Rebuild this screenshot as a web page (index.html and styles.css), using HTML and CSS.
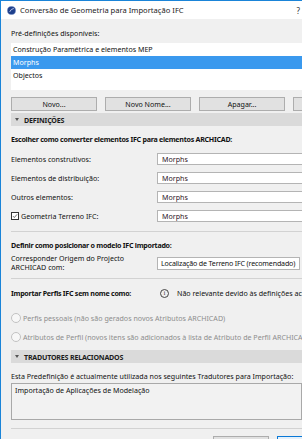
FILE: index.html
```html
<!DOCTYPE html>
<html>
<head>
    <link rel="stylesheet" href="styles.css">
</head>
<body>
    <div class="window">
        <div class="titlebar">
            <svg class="app-icon" viewBox="0 0 10 10">
                <circle cx="5" cy="5" r="4.5" fill="#1d3f8c"/>
                <circle cx="5" cy="5" r="4.5" fill="none" stroke="#6a86c4" stroke-width="0.6"/>
                <path d="M3 6.5 Q4.5 3 7.5 2.8" stroke="#dfe8ff" stroke-width="0.9" fill="none"/>
            </svg>
            <span class="title">Conversão de Geometria para Importação IFC</span>
            <span class="help">?</span>
        </div>

        <div class="content">
            <div class="preset-label">Pré-definições disponíveis:</div>
            <div class="listbox">
                <div class="list-row">Construção Paramétrica e elementos MEP</div>
                <div class="list-row selected">Morphs</div>
                <div class="list-row">Objectos</div>
            </div>

            <div class="button-row">
                <button>Novo...</button>
                <button>Novo Nome...</button>
                <button>Apagar...</button>
                <button></button>
            </div>

            <div class="section-header"><span class="arrow"></span>DEFINIÇÕES</div>

            <div class="bold-line">Escolher como converter elementos IFC para elementos ARCHICAD:</div>

            <div class="field-row first">
                <div class="field-label">Elementos construtivos:</div>
                <div class="field-input">Morphs</div>
            </div>
            <div class="field-row">
                <div class="field-label">Elementos de distribuição:</div>
                <div class="field-input">Morphs</div>
            </div>
            <div class="field-row">
                <div class="field-label">Outros elementos:</div>
                <div class="field-input">Morphs</div>
            </div>
            <div class="field-row">
                <div class="field-label check-label">
                    <span class="checkbox">
                        <svg viewBox="0 0 8 8"><path d="M1.3 4.2 L3.1 6 L6.8 1.8" stroke="#222" stroke-width="0.9" fill="none"/></svg>
                    </span>
                    Geometria Terreno IFC:
                </div>
                <div class="field-input">Morphs</div>
            </div>

            <div class="separator"></div>

            <div class="bold-line">Definir como posicionar o modelo IFC importado:</div>

            <div class="field-row origin-row">
                <div class="field-label two-line">Corresponder Origem do Projecto<br>ARCHICAD com:</div>
                <div class="field-input wide">Localização de Terreno IFC (recomendado)</div>
            </div>

            <div class="separator short-gap"></div>

            <div class="profile-row">
                <div class="bold-line">Importar Perfis IFC sem nome como:</div>
                <div class="info">
                    <span class="info-icon">i</span>
                    <span>Não relevante devido às definições acima</span>
                </div>
            </div>

            <div class="radio-line first-radio"><span class="radio"></span>Perfis pessoais (não são gerados novos Atributos ARCHICAD)</div>
            <div class="radio-line"><span class="radio"></span>Atributos de Perfil (novos itens são adicionados à lista de Atributo de Perfil ARCHICAD)</div>

            <div class="section-header second"><span class="arrow"></span>TRADUTORES RELACIONADOS</div>

            <div class="plain-line">Esta Predefinição é actualmente utilizada nos seguintes Tradutores para Importação:</div>

            <div class="translators">
                <div class="translator">Importação de Aplicações de Modelação</div>
            </div>

            <div class="separator bottom"></div>

            <div class="footer">
                <button class="small"></button>
                <button class="small default"></button>
            </div>
        </div>
    </div>
</body>
</html>
```

FILE: styles.css
```css
:root {
    --window-border: #1a84d8;
    --body-bg: #f0f0f0;
    --header-bg: #dadada;
    --selection: #3a99ee;
    --input-border: #b4b4b4;
    --line: #d2d2d2;
    --disabled: #8d8d8d;
}

body {
    margin: 0;
    width: 302px;
    height: 439px;
    overflow: hidden;
    background: var(--body-bg);
    font-family: "Noto Sans", "Open Sans", sans-serif;
    font-size: 7.1px;
    color: #111;
}

.window {
    height: 100%;
    border-top: 1px solid var(--window-border);
    border-left: 1px solid var(--window-border);
    box-sizing: border-box;
    overflow: hidden;
}

.titlebar {
    height: 18px;
    background: #fff;
    display: flex;
    align-items: center;
    padding-left: 6px;
}

.app-icon {
    width: 9px;
    height: 9px;
    margin-right: 4px;
}

.title {
    font-size: 7.6px;
    color: #222;
}

.help {
    margin-left: auto;
    margin-right: 2px;
    font-size: 8px;
    color: #333;
}

.content {
    padding-left: 10px;
}

.preset-label {
    margin-top: 8px;
    line-height: 12px;
}

.listbox {
    margin-top: 4px;
    height: 47px;
    background: #fff;
}

.list-row {
    height: 13px;
    line-height: 13px;
    padding-left: 2px;
}

.list-row.selected {
    background: var(--selection);
    color: #fff;
}

.button-row {
    margin-top: 7px;
    display: flex;
    gap: 8px;
}

button {
    flex-shrink: 0;
    width: 86px;
    height: 14px;
    padding: 0;
    border: 1px solid #adadad;
    background: #e1e1e1;
    font-family: inherit;
    font-size: 7.1px;
    color: #111;
}

.section-header {
    margin-top: 2px;
    height: 13px;
    display: flex;
    align-items: center;
    background: var(--header-bg);
    font-weight: 700;
    letter-spacing: -0.2px;
    color: #1c1c1c;
}

.section-header.second {
    margin-top: 7px;
}

.arrow {
    width: 0;
    height: 0;
    margin: 0 5px 0 4px;
    border-left: 2.5px solid transparent;
    border-right: 2.5px solid transparent;
    border-top: 3px solid #555;
}

.bold-line {
    margin-top: 7px;
    line-height: 12px;
    font-weight: 700;
    letter-spacing: -0.27px;
    white-space: nowrap;
}

.field-row {
    display: flex;
    align-items: center;
    margin-top: 7px;
    height: 12px;
}

.field-row.first {
    margin-top: 8px;
}

.field-label {
    flex-shrink: 0;
    width: 146px;
}

.check-label {
    display: flex;
    align-items: center;
}

.checkbox {
    width: 8px;
    height: 8px;
    margin-right: 2px;
    border: 1px solid #333;
    box-sizing: border-box;
    background: #fff;
    display: flex;
}

.checkbox svg {
    width: 100%;
    height: 100%;
}

.field-input {
    flex-shrink: 0;
    width: 160px;
    height: 12px;
    line-height: 10px;
    box-sizing: border-box;
    border: 1px solid var(--input-border);
    background: #fff;
    padding-left: 4px;
    color: #2e1526;
    white-space: nowrap;
    overflow: hidden;
}

.field-input.wide {
    width: 143px;
    height: 13px;
    line-height: 11px;
    padding-left: 3px;
    letter-spacing: -0.17px;
    color: #111;
}

.separator {
    margin-top: 9px;
    border-top: 1px solid var(--line);
}

.separator.short-gap {
    margin-top: 6px;
}

.separator.bottom {
    margin-top: 8px;
}

.origin-row {
    margin-top: 3px;
    height: 18px;
}

.two-line {
    line-height: 9px;
}

.profile-row {
    display: flex;
    align-items: center;
    margin-top: 8px;
    height: 12px;
}

.profile-row .bold-line {
    margin-top: 0;
    width: 149px;
    flex-shrink: 0;
}

.info {
    display: flex;
    align-items: center;
    white-space: nowrap;
}

.info-icon {
    width: 7px;
    height: 7px;
    margin-right: 8px;
    border: 0.8px solid #444;
    border-radius: 50%;
    font-size: 5.5px;
    line-height: 7px;
    text-align: center;
    font-family: "Liberation Serif", serif;
}

.radio-line {
    display: flex;
    align-items: center;
    margin-top: 7px;
    line-height: 12px;
    white-space: nowrap;
    color: var(--disabled);
}

.radio-line.first-radio {
    margin-top: 13px;
}

.radio {
    width: 8px;
    height: 8px;
    margin-right: 2px;
    border: 1px solid #c2c2c2;
    border-radius: 50%;
    background: #f7f7f7;
    flex-shrink: 0;
}

.plain-line {
    margin-top: 7px;
    line-height: 12px;
    white-space: nowrap;
}

.translators {
    margin-top: 1px;
    height: 37px;
    box-sizing: border-box;
    border: 1px solid #a9a9a9;
    background: #f2f2f2;
    padding: 1px 3px;
}

.translator {
    line-height: 11px;
}

.footer {
    margin-top: 7px;
    display: flex;
    gap: 8px;
    padding-left: 202px;
}

button.small {
    width: 56px;
}

button.default {
    border-color: #0a78d6;
    background: #e5f1fb;
}
```
